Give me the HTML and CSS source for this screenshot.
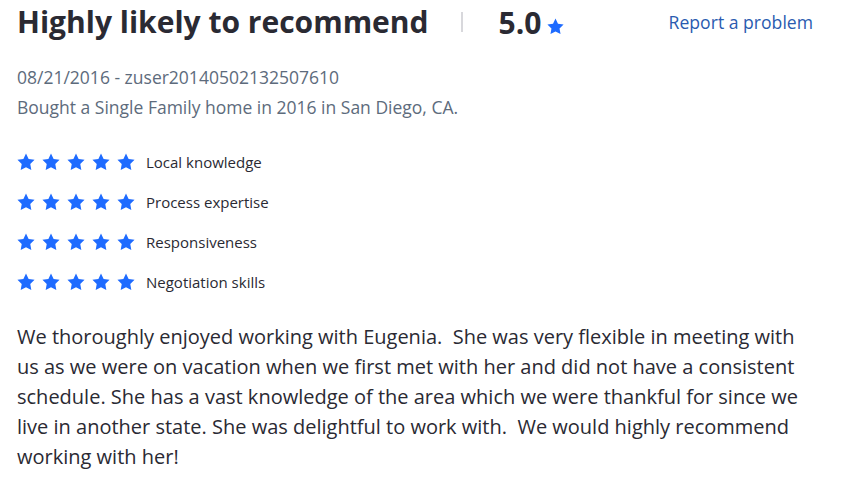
FILE: index.html
```html
<!DOCTYPE html>
<html>
<head>
<meta charset="utf-8">
<link rel="stylesheet" href="styles.css">
</head>
<body>
<div class="review">
  <div class="header">
    <h1 class="title">Highly likely to recommend</h1>
    <span class="sep"></span>
    <span class="score">5.0</span>
    <svg class="star small" viewBox="0 0 24 24"><path d="M12 .8l3.5 7.2 7.9 1.1-5.7 5.6 1.4 7.9L12 18.9l-7.1 3.7 1.4-7.9L.6 9.1l7.9-1.1z"/></svg>
    <a class="report" href="#">Report a problem</a>
  </div>
  <div class="meta first">08/21/2016 - zuser20140502132507610</div>
  <div class="meta">Bought a Single Family home in 2016 in San Diego, CA.</div>
  <ul class="ratings">
    <li class="rating"><span class="stars"><svg class="star" viewBox="0 0 24 24"><path d="M12 .8l3.5 7.2 7.9 1.1-5.7 5.6 1.4 7.9L12 18.9l-7.1 3.7 1.4-7.9L.6 9.1l7.9-1.1z"/></svg><svg class="star" viewBox="0 0 24 24"><path d="M12 .8l3.5 7.2 7.9 1.1-5.7 5.6 1.4 7.9L12 18.9l-7.1 3.7 1.4-7.9L.6 9.1l7.9-1.1z"/></svg><svg class="star" viewBox="0 0 24 24"><path d="M12 .8l3.5 7.2 7.9 1.1-5.7 5.6 1.4 7.9L12 18.9l-7.1 3.7 1.4-7.9L.6 9.1l7.9-1.1z"/></svg><svg class="star" viewBox="0 0 24 24"><path d="M12 .8l3.5 7.2 7.9 1.1-5.7 5.6 1.4 7.9L12 18.9l-7.1 3.7 1.4-7.9L.6 9.1l7.9-1.1z"/></svg><svg class="star" viewBox="0 0 24 24"><path d="M12 .8l3.5 7.2 7.9 1.1-5.7 5.6 1.4 7.9L12 18.9l-7.1 3.7 1.4-7.9L.6 9.1l7.9-1.1z"/></svg></span><span class="label">Local knowledge</span></li>
    <li class="rating"><span class="stars"><svg class="star" viewBox="0 0 24 24"><path d="M12 .8l3.5 7.2 7.9 1.1-5.7 5.6 1.4 7.9L12 18.9l-7.1 3.7 1.4-7.9L.6 9.1l7.9-1.1z"/></svg><svg class="star" viewBox="0 0 24 24"><path d="M12 .8l3.5 7.2 7.9 1.1-5.7 5.6 1.4 7.9L12 18.9l-7.1 3.7 1.4-7.9L.6 9.1l7.9-1.1z"/></svg><svg class="star" viewBox="0 0 24 24"><path d="M12 .8l3.5 7.2 7.9 1.1-5.7 5.6 1.4 7.9L12 18.9l-7.1 3.7 1.4-7.9L.6 9.1l7.9-1.1z"/></svg><svg class="star" viewBox="0 0 24 24"><path d="M12 .8l3.5 7.2 7.9 1.1-5.7 5.6 1.4 7.9L12 18.9l-7.1 3.7 1.4-7.9L.6 9.1l7.9-1.1z"/></svg><svg class="star" viewBox="0 0 24 24"><path d="M12 .8l3.5 7.2 7.9 1.1-5.7 5.6 1.4 7.9L12 18.9l-7.1 3.7 1.4-7.9L.6 9.1l7.9-1.1z"/></svg></span><span class="label">Process expertise</span></li>
    <li class="rating"><span class="stars"><svg class="star" viewBox="0 0 24 24"><path d="M12 .8l3.5 7.2 7.9 1.1-5.7 5.6 1.4 7.9L12 18.9l-7.1 3.7 1.4-7.9L.6 9.1l7.9-1.1z"/></svg><svg class="star" viewBox="0 0 24 24"><path d="M12 .8l3.5 7.2 7.9 1.1-5.7 5.6 1.4 7.9L12 18.9l-7.1 3.7 1.4-7.9L.6 9.1l7.9-1.1z"/></svg><svg class="star" viewBox="0 0 24 24"><path d="M12 .8l3.5 7.2 7.9 1.1-5.7 5.6 1.4 7.9L12 18.9l-7.1 3.7 1.4-7.9L.6 9.1l7.9-1.1z"/></svg><svg class="star" viewBox="0 0 24 24"><path d="M12 .8l3.5 7.2 7.9 1.1-5.7 5.6 1.4 7.9L12 18.9l-7.1 3.7 1.4-7.9L.6 9.1l7.9-1.1z"/></svg><svg class="star" viewBox="0 0 24 24"><path d="M12 .8l3.5 7.2 7.9 1.1-5.7 5.6 1.4 7.9L12 18.9l-7.1 3.7 1.4-7.9L.6 9.1l7.9-1.1z"/></svg></span><span class="label">Responsiveness</span></li>
    <li class="rating"><span class="stars"><svg class="star" viewBox="0 0 24 24"><path d="M12 .8l3.5 7.2 7.9 1.1-5.7 5.6 1.4 7.9L12 18.9l-7.1 3.7 1.4-7.9L.6 9.1l7.9-1.1z"/></svg><svg class="star" viewBox="0 0 24 24"><path d="M12 .8l3.5 7.2 7.9 1.1-5.7 5.6 1.4 7.9L12 18.9l-7.1 3.7 1.4-7.9L.6 9.1l7.9-1.1z"/></svg><svg class="star" viewBox="0 0 24 24"><path d="M12 .8l3.5 7.2 7.9 1.1-5.7 5.6 1.4 7.9L12 18.9l-7.1 3.7 1.4-7.9L.6 9.1l7.9-1.1z"/></svg><svg class="star" viewBox="0 0 24 24"><path d="M12 .8l3.5 7.2 7.9 1.1-5.7 5.6 1.4 7.9L12 18.9l-7.1 3.7 1.4-7.9L.6 9.1l7.9-1.1z"/></svg><svg class="star" viewBox="0 0 24 24"><path d="M12 .8l3.5 7.2 7.9 1.1-5.7 5.6 1.4 7.9L12 18.9l-7.1 3.7 1.4-7.9L.6 9.1l7.9-1.1z"/></svg></span><span class="label">Negotiation skills</span></li>
  </ul>
  <p class="body">We thoroughly enjoyed working with Eugenia.&nbsp; She was very flexible in meeting with us as we were on vacation when we first met with her and did not have a consistent schedule. She has a vast knowledge of the area which we were thankful for since we live in another state. She was delightful to work with.&nbsp; We would highly recommend working with her!</p>
</div>
</body>
</html>
```

FILE: styles.css
```css
html, body {
  margin: 0;
  padding: 0;
  background: #fff;
}
body {
  font-family: "Open Sans", "Liberation Sans", sans-serif;
  color: #2a2a33;
}
.review {
  padding: 0 17px;
  width: 800px;
}
.header {
  display: flex;
  align-items: center;
  height: 44px;
}
.title {
  margin: 0;
  font-size: 30px;
  font-weight: 700;
  line-height: 44px;
}
.sep {
  width: 2px;
  height: 20px;
  background: #d8d8dc;
  margin-left: 32px;
  margin-right: 36px;
}
.score {
  font-size: 30px;
  font-weight: 700;
}
.star {
  width: 18px;
  height: 18px;
  fill: #1e6bff;
  display: block;
  flex: none;
}
.star.small {
  width: 17px;
  height: 17px;
  margin-left: 6px;
  margin-top: 8px;
}
.report {
  margin-left: auto;
  font-size: 17.6px;
  color: #2a5bb0;
  text-decoration: none;
  margin-right: 4px;
}
.meta {
  font-size: 17.5px;
  line-height: 30px;
  color: #5d6b7c;
}
.meta.first {
  margin-top: 18px;
}
.ratings {
  list-style: none;
  margin: 20px 0 0;
  padding: 0;
}
.rating {
  display: flex;
  align-items: center;
  height: 40px;
}
.stars {
  display: flex;
  gap: 7px;
}
.label {
  margin-left: 11px;
  font-size: 15px;
  color: #2a2a33;
}
.body {
  margin: 20px 0 0;
  font-size: 20px;
  line-height: 30px;
}
```
